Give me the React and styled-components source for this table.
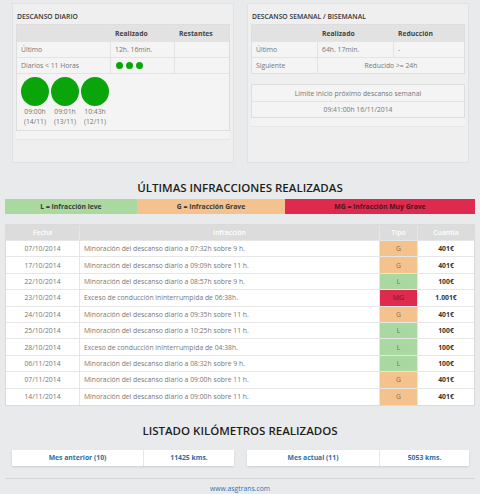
import React from 'react';
import styled, { createGlobalStyle } from 'styled-components';

const GlobalStyle = createGlobalStyle`
  html, body {
    margin: 0;
    background: #e9eaeb;
  }
  body {
    font-family: "Open Sans", "Liberation Sans", sans-serif;
    color: #666;
  }
  * {
    box-sizing: border-box;
  }
`;

const infracciones = [
  { fecha: '07/10/2014', texto: 'Minoración del descanso diario a 07:32h sobre 9 h.', tipo: 'G', cuantia: '401€' },
  { fecha: '17/10/2014', texto: 'Minoración del descanso diario a 09:09h sobre 11 h.', tipo: 'G', cuantia: '401€' },
  { fecha: '22/10/2014', texto: 'Minoración del descanso diario a 08:57h sobre 9 h.', tipo: 'L', cuantia: '100€' },
  { fecha: '23/10/2014', texto: 'Exceso de conducción ininterrumpida de 06:38h.', tipo: 'MG', cuantia: '1.001€' },
  { fecha: '24/10/2014', texto: 'Minoración del descanso diario a 09:35h sobre 11 h.', tipo: 'G', cuantia: '401€' },
  { fecha: '25/10/2014', texto: 'Minoración del descanso diario a 10:25h sobre 11 h.', tipo: 'L', cuantia: '100€' },
  { fecha: '28/10/2014', texto: 'Exceso de conducción ininterrumpida de 04:38h.', tipo: 'L', cuantia: '100€' },
  { fecha: '06/11/2014', texto: 'Minoración del descanso diario a 08:32h sobre 9 h.', tipo: 'L', cuantia: '100€' },
  { fecha: '07/11/2014', texto: 'Minoración del descanso diario a 09:00h sobre 11 h.', tipo: 'G', cuantia: '401€' },
  { fecha: '14/11/2014', texto: 'Minoración del descanso diario a 09:00h sobre 11 h.', tipo: 'G', cuantia: '401€' },
];

const descansos = [
  { hora: '09:00h', dia: '(14/11)' },
  { hora: '09:01h', dia: '(13/11)' },
  { hora: '10:43h', dia: '(12/11)' },
];

const tipoColors = {
  L: '#a9d8a1',
  G: '#f4c28c',
  MG: '#df2a50',
};

const tipoText = {
  L: '#5b7a56',
  G: '#8a6a48',
  MG: '#7a1428',
};

function App() {
  return (
    <>
      <GlobalStyle />
      <Page>
        <Columns>
          <Panel>
            <PanelTitle>Descanso diario</PanelTitle>
            <InfoTable>
              <InfoRow $cols="93px 64px 1fr" $head>
                <InfoCell />
                <InfoCell $strong>Realizado</InfoCell>
                <InfoCell $strong>Restantes</InfoCell>
              </InfoRow>
              <InfoRow $cols="93px 64px 1fr">
                <InfoCell>Último</InfoCell>
                <InfoCell>12h. 16min.</InfoCell>
                <InfoCell />
              </InfoRow>
              <InfoRow $cols="93px 64px 1fr">
                <InfoCell>Diarios &lt; 11 Horas</InfoCell>
                <InfoCell>
                  <Dots>
                    <Dot />
                    <Dot />
                    <Dot />
                  </Dots>
                </InfoCell>
                <InfoCell />
              </InfoRow>
              <CirclesRow>
                {descansos.map((d) => (
                  <CircleItem key={d.dia}>
                    <BigCircle />
                    <span>{d.hora}</span>
                    <span>{d.dia}</span>
                  </CircleItem>
                ))}
              </CirclesRow>
            </InfoTable>
            <Band />
          </Panel>

          <Panel>
            <PanelTitle>Descanso semanal / bisemanal</PanelTitle>
            <InfoTable>
              <InfoRow $cols="65px 76px 1fr" $head>
                <InfoCell />
                <InfoCell $strong>Realizado</InfoCell>
                <InfoCell $strong>Reducción</InfoCell>
              </InfoRow>
              <InfoRow $cols="65px 76px 1fr">
                <InfoCell>Último</InfoCell>
                <InfoCell>64h. 17min.</InfoCell>
                <InfoCell>-</InfoCell>
              </InfoRow>
              <InfoRow $cols="65px 1fr">
                <InfoCell>Siguiente</InfoCell>
                <InfoCell $center>Reducido &gt;= 24h</InfoCell>
              </InfoRow>
            </InfoTable>
            <LimitBox>
              <LimitLine>Límite inicio próximo descanso semanal</LimitLine>
              <LimitLine>09:41:00h 16/11/2014</LimitLine>
            </LimitBox>
            <Band />
          </Panel>
        </Columns>

        <SectionTitle>Últimas infracciones realizadas</SectionTitle>
        <Legend>
          <LegendItem $bg={tipoColors.L}>L = Infracción leve</LegendItem>
          <LegendItem $bg={tipoColors.G}>G = Infracción Grave</LegendItem>
          <LegendItem $bg={tipoColors.MG} $dark>MG = Infracción Muy Grave</LegendItem>
        </Legend>

        <Infractions>
          <InfRow $head>
            <InfCell $center>Fecha</InfCell>
            <InfCell $center>Infracción</InfCell>
            <InfCell $center>Tipo</InfCell>
            <InfCell $center>Cuantía</InfCell>
          </InfRow>
          {infracciones.map((inf, i) => (
            <InfRow key={i}>
              <InfCell $center>{inf.fecha}</InfCell>
              <InfCell>{inf.texto}</InfCell>
              <InfCell $center $bg={tipoColors[inf.tipo]} $color={tipoText[inf.tipo]}>
                {inf.tipo}
              </InfCell>
              <InfCell $center $bold>{inf.cuantia}</InfCell>
            </InfRow>
          ))}
        </Infractions>

        <SectionTitle $km>Listado kilómetros realizados</SectionTitle>
        <Columns>
          <KmBox $cols="131px 1fr">
            <KmCell>Mes anterior (10)</KmCell>
            <KmCell>11425 kms.</KmCell>
          </KmBox>
          <KmBox $cols="132px 1fr">
            <KmCell>Mes actual (11)</KmCell>
            <KmCell>5053 kms.</KmCell>
          </KmBox>
        </Columns>

        <Footer>www.asgtrans.com</Footer>
      </Page>
    </>
  );
}

const Page = styled.div`
  width: 480px;
  padding: 3px 5px 0;
`;

const Columns = styled.div`
  display: grid;
  grid-template-columns: 222px 222px;
  gap: 13px;
  padding-left: 7px;
`;

const Panel = styled.div`
  height: 160px;
  background: #efefef;
  border: 1px solid #e2e2e2;
  padding: 0 3px;
`;

const PanelTitle = styled.div`
  font-size: 6.8px;
  font-weight: 600;
  color: #333;
  text-transform: uppercase;
  line-height: 10px;
  padding: 8px 1px 2px;
`;

const InfoTable = styled.div`
  border: 1px solid #dedede;
  background: #f4f4f4;
`;

const InfoRow = styled.div`
  display: grid;
  grid-template-columns: ${(p) => p.$cols};
  height: 16px;
  background: ${(p) => (p.$head ? '#e2e2e2' : '#f4f4f4')};
  & + & {
    border-top: 1px solid #e3e3e3;
  }
`;

const InfoCell = styled.div`
  display: flex;
  align-items: center;
  justify-content: ${(p) => (p.$center ? 'center' : 'flex-start')};
  padding: 0 4px;
  font-size: 6.8px;
  color: ${(p) => (p.$strong ? '#444' : '#777')};
  font-weight: ${(p) => (p.$strong ? 700 : 400)};
  & + & {
    border-left: 1px solid #e3e3e3;
  }
`;

const Dots = styled.div`
  display: flex;
  gap: 3px;
  padding-left: 1px;
`;

const Dot = styled.span`
  width: 7px;
  height: 7px;
  border-radius: 50%;
  background: #0aa50a;
`;

const CirclesRow = styled.div`
  display: flex;
  gap: 2px;
  height: 57px;
  padding: 3px 0 0 4px;
  border-top: 1px solid #e3e3e3;
`;

const CircleItem = styled.div`
  display: flex;
  flex-direction: column;
  align-items: center;
  width: 28px;
  font-size: 6.8px;
  line-height: 9.5px;
  color: #777;
`;

const BigCircle = styled.span`
  width: 28px;
  height: 29px;
  border-radius: 50%;
  background: #0aa50a;
  margin-bottom: 1px;
`;

const Band = styled.div`
  height: 9px;
  background: #f3f3f3;
  border-bottom: 1px solid #e6e6e6;
`;

const LimitBox = styled.div`
  margin-top: 10px;
  border: 1px solid #dedede;
  background: #f4f4f4;
`;

const LimitLine = styled.div`
  height: 16px;
  display: flex;
  align-items: center;
  justify-content: center;
  font-size: 6.8px;
  color: #777;
  & + & {
    border-top: 1px solid #e3e3e3;
  }
`;

const SectionTitle = styled.h2`
  margin: ${(p) => (p.$km ? '17px 0 12px' : '17px 0 4px')};
  font-size: 11.5px;
  line-height: 15px;
  font-weight: 600;
  color: #1e1e1e;
  text-align: center;
  text-transform: uppercase;
`;

const Legend = styled.div`
  display: grid;
  grid-template-columns: 132px 148px 1fr;
  height: 15px;
`;

const LegendItem = styled.div`
  display: flex;
  align-items: center;
  justify-content: center;
  background: ${(p) => p.$bg};
  font-size: 6.8px;
  font-weight: 700;
  color: ${(p) => (p.$dark ? '#4a1521' : '#3a3a3a')};
`;

const Infractions = styled.div`
  margin-top: 10px;
  background: #fff;
  border: 1px solid #dadada;
`;

const InfRow = styled.div`
  display: grid;
  grid-template-columns: 73px 300px 38px 1fr;
  height: ${(p) => (p.$head ? 16 : 16.4)}px;
  background: ${(p) => (p.$head ? '#dcdcdc' : '#fff')};
  color: ${(p) => (p.$head ? '#fff' : '#777')};
  font-weight: ${(p) => (p.$head ? 600 : 400)};
  border-bottom: 1px solid #e6e6e6;
  &:last-child {
    border-bottom: none;
  }
`;

const InfCell = styled.div`
  display: flex;
  align-items: center;
  justify-content: ${(p) => (p.$center ? 'center' : 'flex-start')};
  padding: 0 4px;
  font-size: 6.8px;
  background: ${(p) => p.$bg || 'transparent'};
  color: ${(p) => (p.$bold ? '#333' : p.$color || 'inherit')};
  font-weight: ${(p) => (p.$bold ? 700 : 'inherit')};
  & + & {
    border-left: 1px solid #e6e6e6;
  }
`;

const KmBox = styled.div`
  display: grid;
  grid-template-columns: ${(p) => p.$cols};
  height: 16px;
  background: #fff;
  box-shadow: 0 1px 2px rgba(0, 0, 0, 0.12);
`;

const KmCell = styled.div`
  display: flex;
  align-items: center;
  justify-content: center;
  font-size: 6.8px;
  font-weight: 700;
  color: #2b6ea6;
  & + & {
    border-left: 1px solid #e8e8e8;
  }
`;

const Footer = styled.div`
  margin-top: 12px;
  border-top: 1px solid #d6d6d6;
  padding-top: 5px;
  line-height: 10px;
  font-size: 6.8px;
  text-align: center;
  color: #2a78b4;
`;

export default App;
